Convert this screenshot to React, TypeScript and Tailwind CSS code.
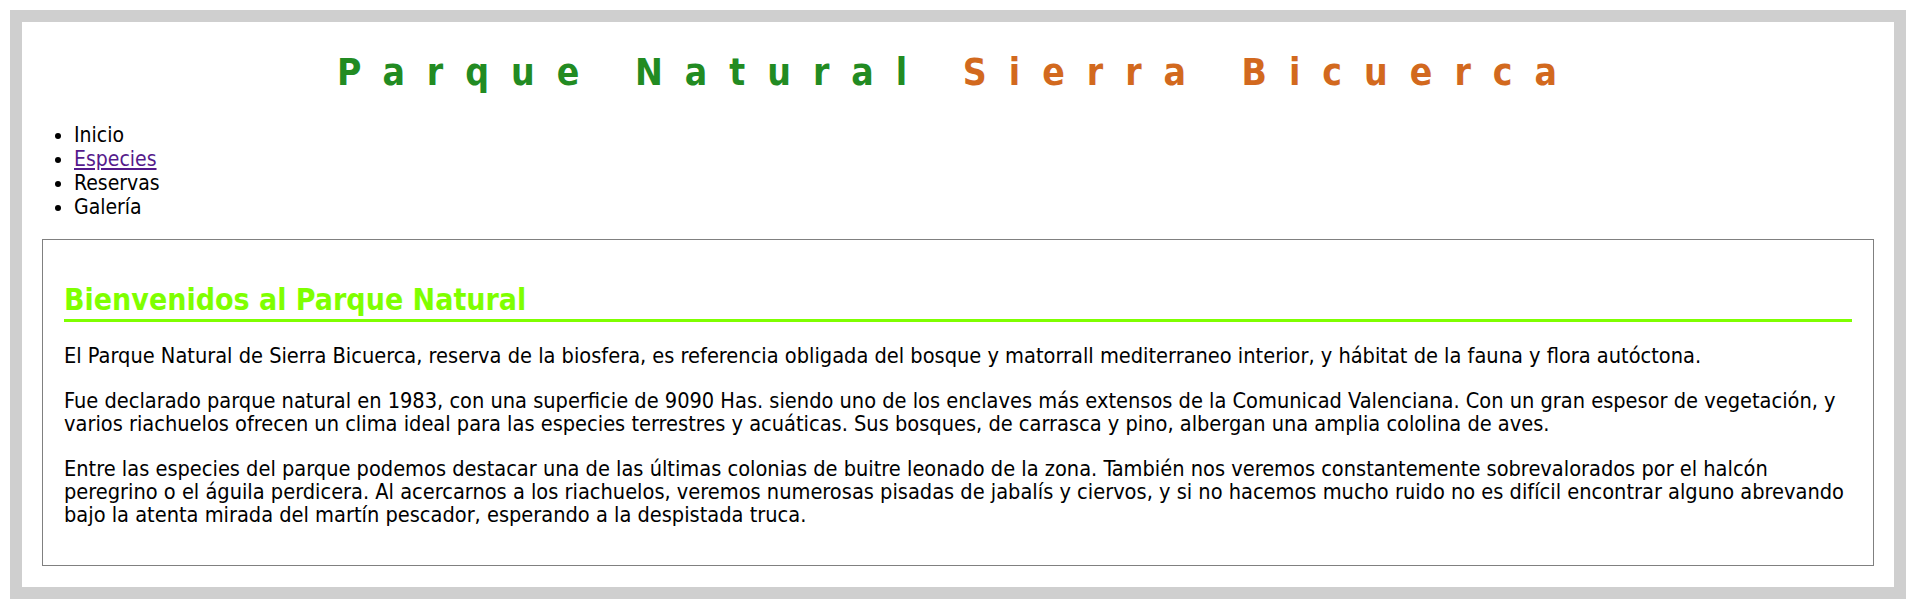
export default function App() {
  return (
    <div
      className="min-h-screen bg-white p-[10px] text-black"
      style={{ fontFamily: "'DejaVu Sans Condensed', 'DejaVu Sans', sans-serif" }}
    >
      <div className="h-[589px] border-[12px] border-[#cfcfcf] bg-white px-5 pt-[30px]">
        {/* Title */}
        <h1 className="text-center text-[37px] font-bold leading-[42px] tracking-[22px]">
          <span className="text-[#228b22]">Parque Natural</span>{" "}
          <span className="text-[#d2691e]">Sierra Bicuerca</span>
        </h1>

        {/* Menu */}
        <ul className="mt-[29px] list-disc pl-[32px] text-[21px] leading-[24px]">
          <li>Inicio</li>
          <li>
            <a href="#" className="text-[#551a8b] underline">
              Especies
            </a>
          </li>
          <li>Reservas</li>
          <li>Galería</li>
        </ul>

        {/* Main content */}
        <div className="mt-[20px] border border-[#808080] px-[21px] pt-[43px] pb-[39px]">
          <h2 className="border-b-[3px] border-[#7fff00] pb-[2px] text-[30px] font-bold leading-[34px] text-[#7fff00]">
            Bienvenidos al Parque Natural
          </h2>
          <div className="text-[21.6px] leading-[23px]">
            <p className="mt-[22px]">
              El Parque Natural de Sierra Bicuerca, reserva de la biosfera, es referencia obligada del bosque y matorrall
              mediterraneo interior, y hábitat de la fauna y flora autóctona.
            </p>
            <p className="mt-[22px]">
              Fue declarado parque natural en 1983, con una superficie de 9090 Has. siendo uno de los enclaves más extensos de
              la Comunicad Valenciana. Con un gran espesor de vegetación, y varios riachuelos ofrecen un clima ideal para las
              especies terrestres y acuáticas. Sus bosques, de carrasca y pino, albergan una amplia cololina de aves.
            </p>
            <p className="mt-[22px]">
              Entre las especies del parque podemos destacar una de las últimas colonias de buitre leonado de la zona.
              También nos veremos constantemente sobrevalorados por el halcón peregrino o el águila perdicera. Al acercarnos
              a los riachuelos, veremos numerosas pisadas de jabalís y ciervos, y si no hacemos mucho ruido no es difícil
              encontrar alguno abrevando bajo la atenta mirada del martín pescador, esperando a la despistada truca.
            </p>
          </div>
        </div>
      </div>
    </div>
  );
}
